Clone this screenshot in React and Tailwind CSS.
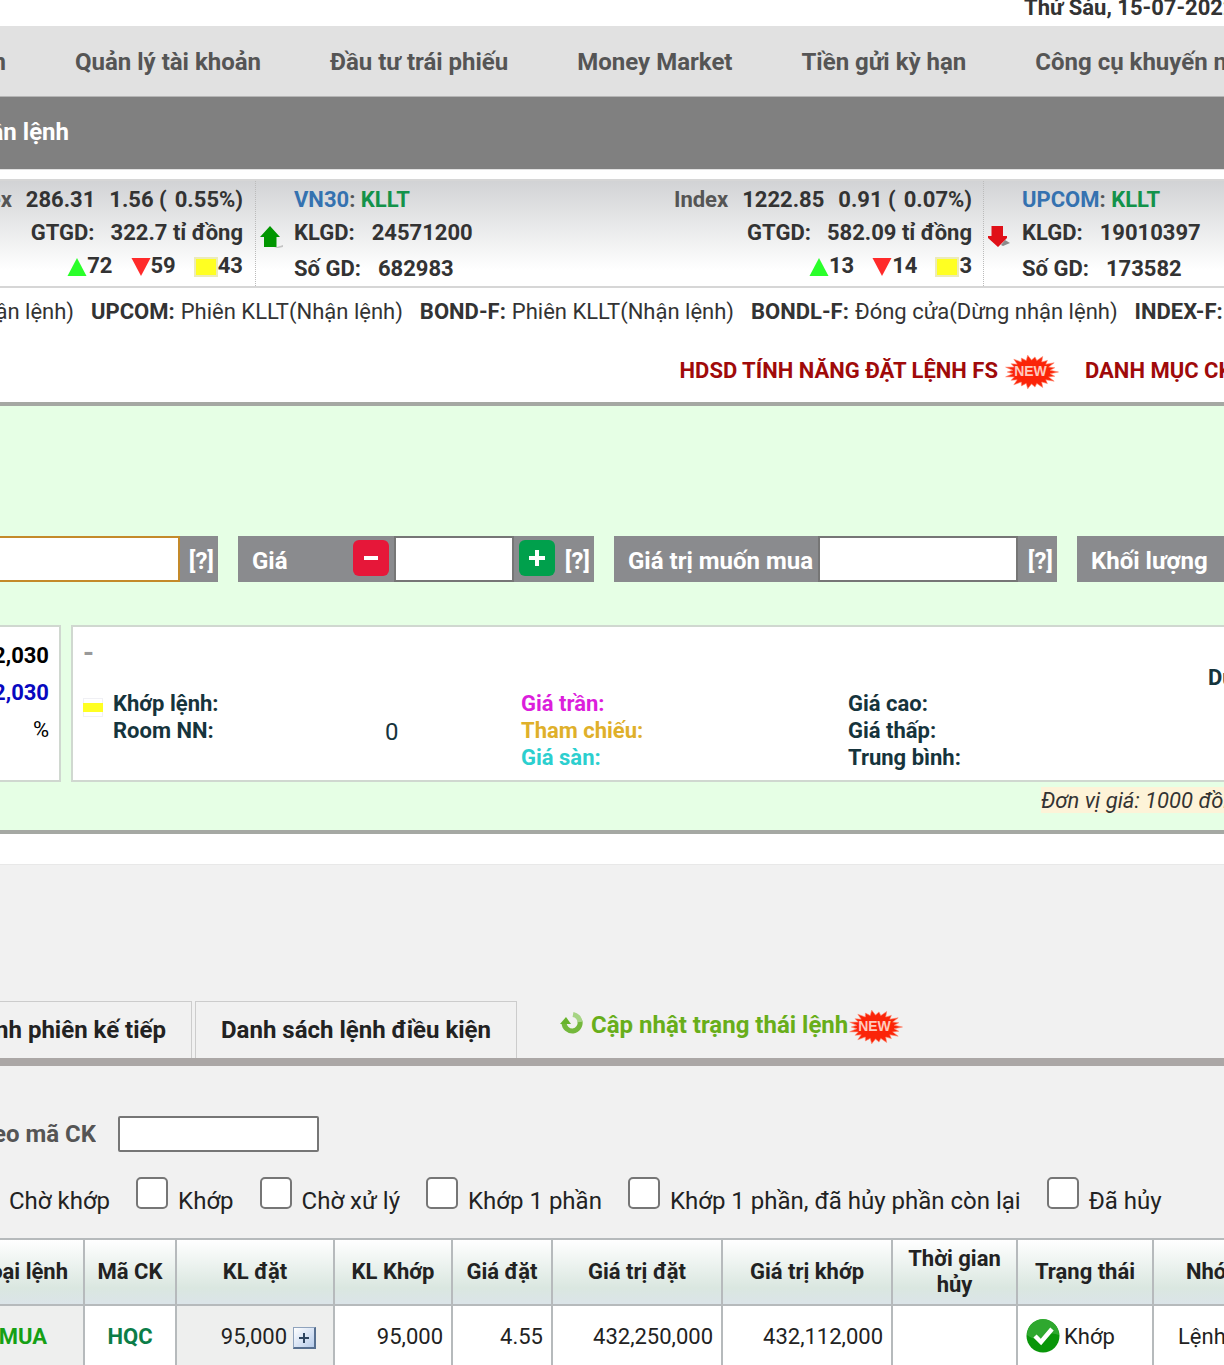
import { Fragment } from "react";

const menu = [
  "Quản lý tài khoản",
  "Đầu tư trái phiếu",
  "Money Market",
  "Tiền gửi kỳ hạn",
  "Công cụ khuyến nghị",
];

const sessions = [
  { name: "UPCOM:", status: "Phiên KLLT(Nhận lệnh)" },
  { name: "BOND-F:", status: "Phiên KLLT(Nhận lệnh)" },
  { name: "BONDL-F:", status: "Đóng cửa(Dừng nhận lệnh)" },
  { name: "INDEX-F:", status: "" },
];

const filters = [
  "Chờ khớp",
  "Khớp",
  "Chờ xử lý",
  "Khớp 1 phần",
  "Khớp 1 phần, đã hủy phần còn lại",
  "Đã hủy",
];

const burst = Array.from({ length: 44 }, (_, i) => {
  const angle = (i * Math.PI) / 22;
  const long = i % 4 === 0 ? 1 : 0.9;
  const r = i % 2 === 0 ? long : 0.7;
  const x = 27 + 27 * r * Math.cos(angle);
  const y = 17 + 17 * r * Math.sin(angle);
  return `${x.toFixed(1)},${y.toFixed(1)}`;
}).join(" ");

function NewBadge() {
  return (
    <svg width="55" height="34" viewBox="0 0 54 34" className="shrink-0">
      <polygon points={burst} fill="#fb2408" stroke="#ff8a70" strokeWidth="0.6" />
      <text
        x="26"
        y="21"
        textAnchor="middle"
        fontSize="14"
        fontWeight="700"
        fill="#ffc9bd"
        fontFamily="Liberation Sans, sans-serif"
      >
        NEW
      </text>
    </svg>
  );
}

function TrendArrow({ up }) {
  return (
    <svg width="26" height="24" viewBox="0 0 26 24" className="shrink-0">
      {up ? (
        <>
          <path d="M14 22 L23 19 L23 21 L18 22 Z" fill="#c4c4c4" />
          <path d="M10 0 L20 11 H16.500 V21 H4 V11 H0 Z" fill="#009600" />
        </>
      ) : (
        <>
          <path d="M13 19 L17 14 L22 17 L15 20 Z" fill="#8b8b8b" />
          <path d="M3.500 0 H15 V10 H19 V12 L10 21 L0 12 V10 H3.500 Z" fill="#e01018" />
        </>
      )}
    </svg>
  );
}

function Counts({ up, down, same }) {
  return (
    <div className="flex items-center justify-end gap-[18px]">
      <span className="flex items-center">
        <svg width="20" height="20" viewBox="0 0 20 20">
          <path d="M10 2 L19.500 20 H0.500 Z" fill="#2aff2a" />
        </svg>
        {up}
      </span>
      <span className="flex items-center">
        <svg width="20" height="20" viewBox="0 0 20 20">
          <path d="M0.500 2 H19.500 L10 20 Z" fill="#ff2a2a" />
        </svg>
        {down}
      </span>
      <span className="flex items-center">
        <span className="mt-[2px] h-[20px] w-[24px] border-2 border-[#ecebb8] bg-[#ffff22]" />
        {same}
      </span>
    </div>
  );
}

function IndexFigures({ index, change, percent, value, counts }) {
  return (
    <div className="flex flex-col items-end whitespace-nowrap leading-[33px]">
      <p>
        <span className="mr-[14px] text-[#555]">Index</span>
        <span className="mr-[14px]">{index}</span>
        <span className="mr-2">{change} (</span>
        {percent})
      </p>
      <p>
        <span className="mr-4">GTGD:</span>
        {value}
      </p>
      <Counts {...counts} />
    </div>
  );
}

function IndexInfo({ up, name, volume, deals }) {
  return (
    <div className="flex whitespace-nowrap">
      <div className="mt-[43px] w-[34px]">
        <TrendArrow up={up} />
      </div>
      <div className="leading-[33px]">
        <p className="text-[#555]">
          <a href="#" className="text-[#3572b0]">{name}</a>:{" "}
          <span className="text-[#13924a]">KLLT</span>
        </p>
        <p>
          <span className="mr-[17px]">KLGD:</span>
          {volume}
        </p>
        <p className="mt-[3px]">
          <span className="mr-[17px]">Số GD:</span>
          {deals}
        </p>
      </div>
    </div>
  );
}

function Help() {
  return (
    <button type="button" className="px-1 pt-1 text-2xl font-bold">
      [?]
    </button>
  );
}

function OrderForm() {
  return (
    <form className="flex h-[46px] gap-5 overflow-hidden whitespace-nowrap text-2xl font-bold text-white">
      <div className="flex w-[218px] shrink-0 items-center justify-between bg-[#8a8b8e]">
        <input
          aria-label="Mã CK"
          className="h-[46px] w-[180px] border-2 border-l-0 border-[#c48a2a] bg-white outline-none"
        />
        <Help />
      </div>
      <div className="flex w-[356px] shrink-0 items-center bg-[#8a8b8e]">
        <label htmlFor="price" className="w-[115px] pt-1 pl-[14px]">Giá</label>
        <button
          type="button"
          aria-label="Giảm giá"
          className="mb-[2px] flex h-9 w-9 items-center justify-center rounded-md bg-[#e61739]"
        >
          <span className="h-1 w-[14px] bg-white" />
        </button>
        <input id="price" className="mx-[5px] h-[46px] w-[120px] border-2 border-[#767676] bg-white" />
        <button
          type="button"
          aria-label="Tăng giá"
          className="mb-[2px] flex h-9 w-9 items-center justify-center rounded-md bg-[#00a04c]"
        >
          <svg width="16" height="18" viewBox="0 0 16 18">
            <path d="M8 1 V17 M0 9 H16" stroke="#fff" strokeWidth="4" />
          </svg>
        </button>
        <span className="ml-auto">
          <Help />
        </span>
      </div>
      <div className="flex w-[443px] shrink-0 items-center justify-between bg-[#8a8b8e]">
        <label htmlFor="amount" className="w-[204px] pt-1 pl-[14px]">Giá trị muốn mua</label>
        <input id="amount" className="mr-auto h-[46px] w-[200px] border-2 border-[#767676] bg-white" />
        <Help />
      </div>
      <div className="flex grow items-center bg-[#8a8b8e]">
        <span className="pt-1 pl-[14px]">Khối lượng</span>
      </div>
    </form>
  );
}

function StockInfo() {
  return (
    <div className="flex h-[157px] gap-[10px] overflow-hidden whitespace-nowrap">
      <div className="flex w-[61px] shrink-0 flex-col items-end overflow-hidden border-2 border-l-0 border-[#d0d8d0] bg-white pt-[10px] pr-[10px] leading-[37px]">
        <span className="font-bold text-black">22,030</span>
        <span className="font-bold text-[#0808c0]">22,030</span>
        <span className="text-black">%</span>
      </div>
      <div className="grow border-2 border-r-0 border-[#d0d8d0] bg-white pl-[10px] text-[#16343c]">
        <p className="h-[42px] pt-2 text-[28px] leading-9 font-bold text-[#999]">-</p>
        <p className="h-[21px] pt-1 pl-[1125px] leading-[10px] font-bold">Dư mua</p>
        <div className="grid grid-cols-[438px_327px_1fr] leading-[27px] font-bold">
          <div className="flex">
            <svg width="20" height="20" viewBox="0 0 20 20" className="mt-2 mr-[10px]">
              <rect x="0.500" y="0.500" width="19" height="18" fill="#fff" stroke="#f0f0f4" />
              <rect y="5" width="20" height="9" fill="#ffff22" />
            </svg>
            <div className="w-[272px]">
              <p>Khớp lệnh:</p>
              <p>Room NN:</p>
            </div>
            <p className="pt-[29px] text-2xl leading-[27px] font-normal">0</p>
          </div>
          <div>
            <p className="text-[#dc1edc]">Giá trần:</p>
            <p className="text-[#dfb02a]">Tham chiếu:</p>
            <p className="text-[#2ccfcf]">Giá sàn:</p>
          </div>
          <div>
            <p>Giá cao:</p>
            <p>Giá thấp:</p>
            <p>Trung bình:</p>
          </div>
        </div>
      </div>
    </div>
  );
}

function OrderTable() {
  const th =
    "h-[66px] border-2 border-[#b6babc] bg-linear-to-b from-white via-[#dae7e0] via-75% to-[#dbe4e8] px-2 leading-[26px] font-bold";
  const td = "h-[61px] border-2 border-b-0 border-[#b6babc] px-2 text-right";

  return (
    <table className="w-full table-fixed border-collapse overflow-hidden whitespace-nowrap text-[#222]">
      <colgroup>
        <col className="w-[84px]" />
        <col className="w-[92px]" />
        <col className="w-[158px]" />
        <col className="w-[118px]" />
        <col className="w-[100px]" />
        <col className="w-[170px]" />
        <col className="w-[170px]" />
        <col className="w-[125px]" />
        <col className="w-[136px]" />
        <col />
      </colgroup>
      <thead>
        <tr>
          <th className={`${th} overflow-hidden border-l-0`}>
            <span className="flex justify-end pr-[7px]">Loại lệnh</span>
          </th>
          <th className={th}>Mã CK</th>
          <th className={th}>KL đặt</th>
          <th className={th}>KL Khớp</th>
          <th className={th}>Giá đặt</th>
          <th className={th}>Giá trị đặt</th>
          <th className={th}>Giá trị khớp</th>
          <th className={`${th} whitespace-normal`}>Thời gian hủy</th>
          <th className={th}>Trạng thái</th>
          <th className={`${th} overflow-hidden border-r-0`}>
            <span className="flex pl-6">Nhóm</span>
          </th>
        </tr>
      </thead>
      <tbody className="bg-white">
        <tr>
          <td className={`${td} overflow-hidden border-l-0 bg-[#eeefee]`}>
            <span className="flex justify-end pr-7 font-bold text-[#15a015]">MUA</span>
          </td>
          <td className={td}>
            <a href="#" className="block text-center font-bold text-[#0c7d48]">HQC</a>
          </td>
          <td className={`${td} bg-[#eeefee]`}>
            <span className="flex items-center justify-end gap-[6px] pr-[9px]">
              95,000
              <button
                type="button"
                aria-label="Chi tiết"
                className="mt-1 flex h-[22px] w-[23px] items-center justify-center border border-r-2 border-b-2 border-[#8fa3bd] border-r-[#566f90] border-b-[#566f90] bg-linear-to-br from-white to-[#b5cbea]"
              >
                <svg width="12" height="12" viewBox="0 0 12 12">
                  <path d="M6 1 V11 M1 6 H11" stroke="#2d4560" strokeWidth="2" />
                </svg>
              </button>
            </span>
          </td>
          <td className={td}>95,000</td>
          <td className={td}>4.55</td>
          <td className={td}>432,250,000</td>
          <td className={td}>432,112,000</td>
          <td className={td}></td>
          <td className={td}>
            <span className="flex items-center gap-1">
              <svg width="34" height="34" viewBox="0 0 34 34">
                <circle cx="17" cy="17" r="16.500" fill="#0a960a" />
                <path d="M1 16 A16 16 0 0 1 33 16 Q24 12 17 18 Q10 23 1 16 Z" fill="#2fa82f" />
                <path d="M9 17 L15 23 L26 10" fill="none" stroke="#fff" strokeWidth="4.500" />
              </svg>
              Khớp
            </span>
          </td>
          <td className={`${td} overflow-hidden border-r-0`}>
            <span className="flex pl-4">Lệnh thường</span>
          </td>
        </tr>
      </tbody>
    </table>
  );
}

export default function App() {
  return (
    <div className="w-full overflow-hidden bg-white font-['Roboto',sans-serif] text-[22px] text-[#333]">
      <header>
        <div className="flex h-[26px] justify-end overflow-hidden">
          <p className="-mt-[3px] w-[200px] leading-[22px] font-bold whitespace-nowrap">
            Thứ Sáu, 15-07-2022
          </p>
        </div>
        <nav className="flex h-[71px] items-center gap-[69px] overflow-hidden border-b border-[#b5b5b5] bg-[#e1e1e1] pt-[2px] text-2xl font-bold whitespace-nowrap text-[#555]">
          <a href="#" className="flex w-[6px] shrink-0 justify-end">n</a>
          {menu.map((item) => (
            <a key={item} href="#">{item}</a>
          ))}
        </nav>
        <div className="flex h-[73px] items-center overflow-hidden border-b border-[#e0e0e0] bg-[#808080] pb-[2px] text-2xl font-bold whitespace-nowrap text-white">
          <a href="#" className="flex w-[69px] justify-end">Xác nhận lệnh</a>
        </div>
      </header>

      <section className="mt-[9px] grid h-[109px] grid-cols-[256fr_728fr_240fr] overflow-hidden border-y-2 border-[#d6d6d6] bg-linear-to-b from-[#d2d3d5] to-white to-85% font-bold">
        <div className="flex min-w-0 justify-end overflow-hidden border-r border-dotted border-[#bbb] pt-[2px] pr-3">
          <IndexFigures
            index="286.31"
            change="1.56"
            percent="0.55%"
            value="322.7 tỉ đồng"
            counts={{ up: 72, down: 59, same: 43 }}
          />
        </div>
        <div className="flex min-w-0 justify-between border-r border-dotted border-[#bbb] pt-[2px] pr-[11px] pl-1">
          <IndexInfo up name="VN30" volume="24571200" deals="682983" />
          <IndexFigures
            index="1222.85"
            change="0.91"
            percent="0.07%"
            value="582.09 tỉ đồng"
            counts={{ up: 13, down: 14, same: 3 }}
          />
        </div>
        <div className="min-w-0 overflow-hidden pt-[2px] pl-1">
          <IndexInfo name="UPCOM" volume="19010397" deals="173582" />
        </div>
      </section>

      <div className="flex h-[46px] items-center overflow-hidden whitespace-nowrap">
        <span className="mr-[17px] flex w-[74px] shrink-0 justify-end">Phiên KLLT(Nhận lệnh)</span>
        {sessions.map(({ name, status }) => (
          <Fragment key={name}>
            <b className="mr-[6px]">{name}</b>
            <span className="mr-[17px]">{status}</span>
          </Fragment>
        ))}
      </div>

      <div className="flex h-[68px] items-center justify-end overflow-hidden pt-1 font-bold whitespace-nowrap text-[#a00a0a]">
        <a href="#" className="mr-[26px] flex items-center gap-[6px]">
          HDSD TÍNH NĂNG ĐẶT LỆNH FS
          <span className="pt-1">
            <NewBadge />
          </span>
        </a>
        <a href="#" className="w-[139px] shrink-0">DANH MỤC CK</a>
      </div>

      <section className="border-y-4 border-[#a5a8a3] bg-[#e6ffe5] pt-[130px]">
        <OrderForm />
        <div className="mt-[43px]">
          <StockInfo />
        </div>
        <div className="flex h-12 justify-end overflow-hidden pt-[5px]">
          <p className="h-[26px] w-[183px] bg-[#fdf3d8] leading-[27px] whitespace-nowrap italic">
            Đơn vị giá: 1000 đồng
          </p>
        </div>
      </section>

      <section className="mt-[30px] border-t border-[#e8e8e8] bg-[#f1f1f1] pt-[136px]">
        <div className="flex h-[57px] gap-[3px] overflow-hidden text-2xl font-bold whitespace-nowrap text-[#222]">
          <button
            type="button"
            className="flex w-[192px] shrink-0 items-center justify-end border border-b-0 border-l-0 border-[#ccc] pr-[25px]"
          >
            Danh sách lệnh phiên kế tiếp
          </button>
          <button type="button" className="shrink-0 border border-b-0 border-[#ccc] px-[25px]">
            Danh sách lệnh điều kiện
          </button>
          <a href="#" className="ml-10 flex items-center pb-[10px] text-[#68ae1a]">
            <svg width="24" height="24" viewBox="0 0 24 24" className="mr-[7px] mb-1">
              <path
                d="M20 10 A8.500 8.500 0 0 1 13 20 A8.500 8.500 0 0 1 4 12"
                fill="none"
                stroke="#74b83c"
                strokeWidth="5"
              />
              <path d="M13 3.500 A8.500 8.500 0 0 1 20 11" fill="none" stroke="#a6d484" strokeWidth="5" />
              <path d="M0 13 L6 6 L11 13 Z" fill="#68b32c" />
            </svg>
            Cập nhật trạng thái lệnh
            <span className="pt-1">
              <NewBadge />
            </span>
          </a>
        </div>
        <div className="h-2 bg-[#aba7a6]" />

        <div className="flex h-[86px] items-end pt-[50px] text-2xl font-bold whitespace-nowrap text-[#555]">
          <label htmlFor="code" className="mr-[22px] flex h-9 w-24 items-center justify-end overflow-hidden">
            Theo mã CK
          </label>
          <input id="code" className="h-9 w-[201px] rounded-xs border-2 border-[#767676] bg-white" />
        </div>

        <div className="mt-[25px] -ml-[33px] flex h-[61px] gap-[26px] text-2xl whitespace-nowrap text-[#222]">
          {filters.map((item) => (
            <label key={item} className="flex items-start gap-[10px]">
              <input
                type="checkbox"
                className="h-8 w-8 shrink-0 appearance-none rounded-[5px] border-2 border-[#767676] bg-white"
              />
              <span className="pt-2">{item}</span>
            </label>
          ))}
        </div>

        <OrderTable />
      </section>
    </div>
  );
}
